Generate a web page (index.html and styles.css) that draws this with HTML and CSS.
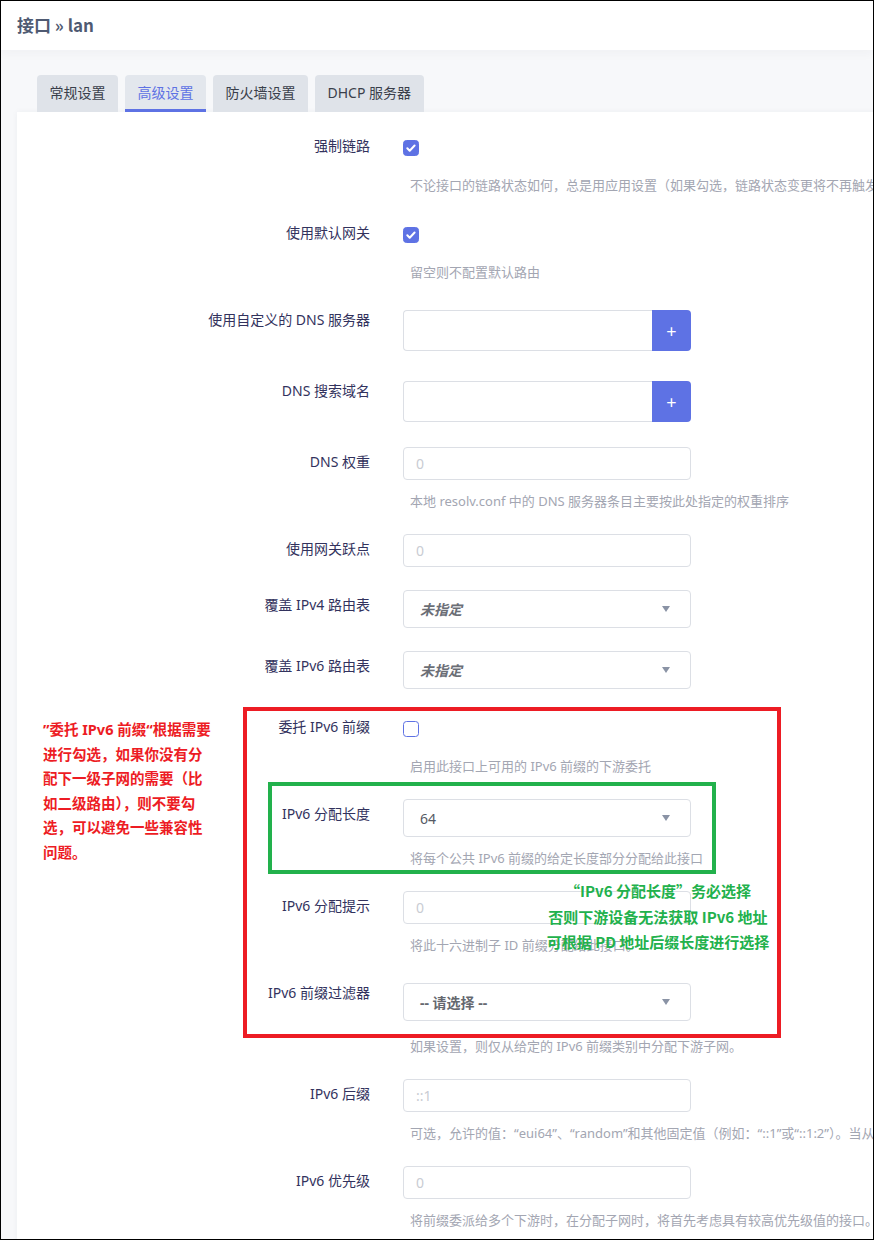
FILE: index.html
```html
<!DOCTYPE html>
<html lang="zh-CN">
<head>
<meta charset="utf-8">
<title>接口 » lan</title>
<link rel="stylesheet" href="styles.css">
</head>
<body>
<div class="frame">
  <header class="topbar"><h2 class="title">接口 » lan</h2></header>
  <main class="main">
    <nav class="tabs">
      <span class="tab">常规设置</span>
      <span class="tab active">高级设置</span>
      <span class="tab">防火墙设置</span>
      <span class="tab">DHCP 服务器</span>
    </nav>
    <section class="card">
      <div class="row cb-row">
        <div class="lbl">强制链路</div>
        <div class="ctl">
          <span class="cb checked"><svg viewBox="0 0 16 16" width="16" height="16"><path d="M4.3 8.3l2.4 2.4 4.9-5.2" fill="none" stroke="#fff" stroke-width="2" stroke-linecap="round" stroke-linejoin="round"/></svg></span>
          <div class="desc">不论接口的链路状态如何，总是用应用设置（如果勾选，链路状态变更将不再触发热插拔事件处理）</div>
        </div>
      </div>
      <div class="row cb-row">
        <div class="lbl">使用默认网关</div>
        <div class="ctl">
          <span class="cb checked"><svg viewBox="0 0 16 16" width="16" height="16"><path d="M4.3 8.3l2.4 2.4 4.9-5.2" fill="none" stroke="#fff" stroke-width="2" stroke-linecap="round" stroke-linejoin="round"/></svg></span>
          <div class="desc">留空则不配置默认路由</div>
        </div>
      </div>
      <div class="row">
        <div class="lbl">使用自定义的 DNS 服务器</div>
        <div class="ctl">
          <div class="dyn"><span class="inp"></span><span class="plus">+</span></div>
        </div>
      </div>
      <div class="row">
        <div class="lbl">DNS 搜索域名</div>
        <div class="ctl">
          <div class="dyn"><span class="inp"></span><span class="plus">+</span></div>
        </div>
      </div>
      <div class="row">
        <div class="lbl">DNS 权重</div>
        <div class="ctl">
          <div class="inp">0</div>
          <div class="desc">本地 resolv.conf 中的 DNS 服务器条目主要按此处指定的权重排序</div>
        </div>
      </div>
      <div class="row">
        <div class="lbl">使用网关跃点</div>
        <div class="ctl"><div class="inp">0</div></div>
      </div>
      <div class="row">
        <div class="lbl">覆盖 IPv4 路由表</div>
        <div class="ctl"><div class="sel"><span class="val unset">未指定</span><span class="caret"></span></div></div>
      </div>
      <div class="row">
        <div class="lbl">覆盖 IPv6 路由表</div>
        <div class="ctl"><div class="sel"><span class="val unset">未指定</span><span class="caret"></span></div></div>
      </div>
      <div class="row cb-row">
        <div class="lbl">委托 IPv6 前缀</div>
        <div class="ctl">
          <span class="cb"></span>
          <div class="desc">启用此接口上可用的 IPv6 前缀的下游委托</div>
        </div>
      </div>
      <div class="row">
        <div class="lbl">IPv6 分配长度</div>
        <div class="ctl">
          <div class="sel"><span class="val">64</span><span class="caret"></span></div>
          <div class="desc">将每个公共 IPv6 前缀的给定长度部分分配给此接口</div>
        </div>
      </div>
      <div class="row">
        <div class="lbl">IPv6 分配提示</div>
        <div class="ctl">
          <div class="inp">0</div>
          <div class="desc">将此十六进制子 ID 前缀分配给此接口。</div>
        </div>
      </div>
      <div class="row filter-row">
        <div class="lbl">IPv6 前缀过滤器</div>
        <div class="ctl">
          <div class="sel"><span class="val pick">-- 请选择 --</span><span class="caret"></span></div>
          <div class="desc">如果设置，则仅从给定的 IPv6 前缀类别中分配下游子网。</div>
        </div>
      </div>
      <div class="row">
        <div class="lbl">IPv6 后缀</div>
        <div class="ctl">
          <div class="inp">::1</div>
          <div class="desc">可选，允许的值：“eui64”、“random”和其他固定值（例如：“::1”或“::1:2”）。当从委托服务器收到 IPv6 前缀（如 a:b:c:d::）时，使用后缀形成 IPv6 地址。</div>
        </div>
      </div>
      <div class="row">
        <div class="lbl">IPv6 优先级</div>
        <div class="ctl">
          <div class="inp">0</div>
          <div class="desc">将前缀委派给多个下游时，在分配子网时，将首先考虑具有较高优先级值的接口。</div>
        </div>
      </div>
    </section>
  </main>

  <div class="mark red-box"></div>
  <div class="mark green-box"></div>
  <p class="note red-note">”委托 IPv6 前缀“根据需要<br>进行勾选，如果你没有分<br>配下一级子网的需要（比<br>如二级路由），则不要勾<br>选，可以避免一些兼容性<br>问题。</p>
  <p class="note green-note">“IPv6 分配长度”务必选择<br>否则下游设备无法获取 IPv6 地址<br>可根据 PD 地址后缀长度进行选择</p>
</div>
</body>
</html>
```
FILE: styles.css
```css
html, body {
  margin: 0;
  padding: 0;
  background: #fff;
}

.frame {
  position: relative;
  width: 874px;
  height: 1240px;
  box-sizing: border-box;
  border: 1px solid #000;
  overflow: hidden;
  background: #f7f8fa;
  font-family: "Noto Sans", "Noto Sans CJK SC", sans-serif;
}

.topbar {
  height: 49px;
  background: #fff;
  display: flex;
  align-items: center;
  padding-left: 16px;
  box-shadow: 0 3px 10px rgba(40, 50, 80, 0.04);
  position: relative;
}

.title {
  margin: 0;
  font-family: "Noto Sans CJK SC", sans-serif;
  font-size: 17px;
  font-weight: 700;
  color: #4f5a72;
  line-height: 24px;
  margin-top: -2px;
}

.main {
  padding: 25px 0 0 16px;
}

.tabs {
  display: flex;
  gap: 7px;
  margin-left: 20px;
}

.tab {
  height: 37px;
  line-height: 35px;
  padding: 0 12.5px;
  background: #dfe3e9;
  border-radius: 4px 4px 0 0;
  font-size: 14px;
  color: #3a3f4b;
  box-sizing: border-box;
}

.tab.active {
  background: #e3e7ed;
  color: #5e72e4;
  box-shadow: inset 0 -3px 0 #5e72e4;
}

.card {
  width: 920px;
  height: 1200px;
  background: #fff;
  padding-top: 19px;
  box-shadow: 0 0 6px rgba(40, 50, 80, 0.05);
  box-sizing: border-box;
}

.row {
  display: grid;
  grid-template-columns: 353px 288px;
  column-gap: 33px;
  margin-bottom: 23px;
}

.lbl {
  text-align: right;
  font-size: 14px;
  line-height: 20px;
  padding-top: 5px;
  color: #32325d;
  white-space: nowrap;
}

.ctl {
  min-width: 0;
}

.cb-row .ctl {
  padding-top: 9px;
}

.cb {
  display: block;
  width: 16px;
  height: 16px;
  box-sizing: border-box;
  border: 1px solid #5e72e4;
  border-radius: 3.5px;
  background: #fff;
}

.cb.checked {
  background: #5e72e4;
}

.cb svg {
  display: block;
  margin: -1px;
}

.desc {
  margin-top: 11px;
  padding-left: 7px;
  font-size: 13px;
  line-height: 20px;
  color: #a3a6b2;
  white-space: nowrap;
}

.cb + .desc {
  margin-top: 19px;
}

.filter-row .sel {
  margin-top: 5px;
}

.filter-row .desc {
  margin-top: 15px;
}

.inp {
  display: block;
  height: 33px;
  box-sizing: border-box;
  border: 1px solid #dcdfe5;
  border-radius: 4px;
  padding: 0 12px;
  font-size: 14px;
  line-height: 31px;
  color: #c9ccd3;
  background: #fff;
}

.dyn {
  display: flex;
  height: 41px;
  margin: 5px 0 2px;
}

.dyn .inp {
  flex: 1;
  height: 41px;
  border-radius: 4px 0 0 4px;
  border-right: 0;
}

.plus {
  width: 39px;
  background: #5e72e4;
  color: #fff;
  border-radius: 0 4px 4px 0;
  display: flex;
  align-items: center;
  justify-content: center;
  font-size: 18px;
  line-height: 1;
}

.sel {
  height: 38px;
  box-sizing: border-box;
  border: 1px solid #dcdfe5;
  border-radius: 4px;
  display: flex;
  align-items: center;
  justify-content: space-between;
  padding: 0 20px 0 16px;
  background: #fff;
}

.val {
  font-size: 14px;
  color: #555a64;
}

.val.unset {
  font-weight: 700;
  font-style: italic;
  color: #6b6e76;
}

.val.pick {
  font-weight: 700;
  color: #65686f;
}

.caret {
  width: 0;
  height: 0;
  border-left: 4px solid transparent;
  border-right: 4px solid transparent;
  border-top: 6px solid #8a93a5;
}

.mark {
  position: absolute;
  box-sizing: border-box;
  border: 4px solid #ed1c24;
}

.red-box {
  left: 242px;
  top: 706px;
  width: 538px;
  height: 331px;
}

.green-box {
  left: 267px;
  top: 781px;
  width: 448px;
  height: 92px;
  border-color: #22b14c;
}

.note {
  position: absolute;
  margin: 0;
  font-weight: 700;
  white-space: nowrap;
}

.red-note {
  left: 42px;
  top: 716px;
  font-size: 14.5px;
  line-height: 24.6px;
  color: #ed1c24;
}

.green-note {
  left: 540px;
  top: 877px;
  width: 234px;
  text-align: center;
  font-family: "Noto Sans CJK SC", sans-serif;
  font-size: 15px;
  line-height: 25.5px;
  color: #22b14c;
}
```
